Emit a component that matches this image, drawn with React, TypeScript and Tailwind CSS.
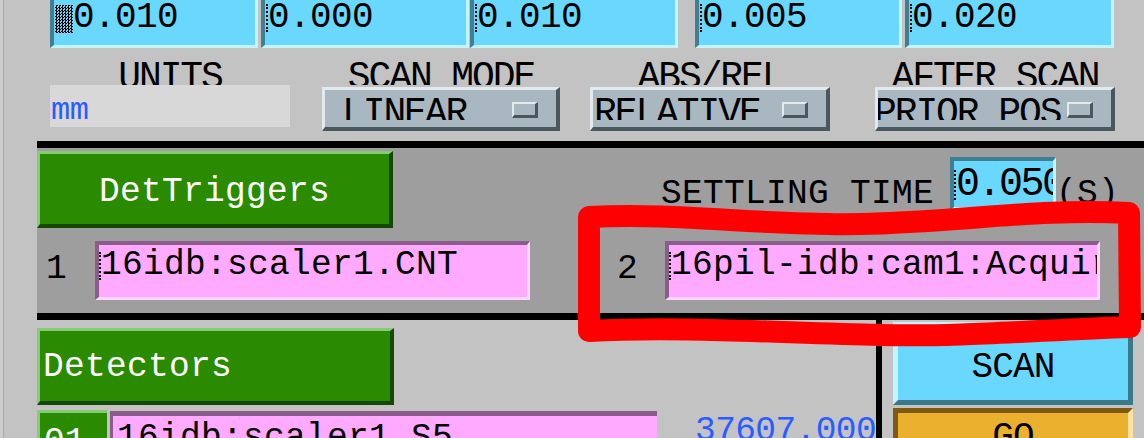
import React from "react";

type FieldProps = { value: string; className?: string; first?: boolean };

function TopField({ value, className = "", first }: FieldProps) {
  return (
    <div
      className={`h-full overflow-hidden bg-[#6ad8fc] border-l-[4px] border-r-[3px] border-b-[3px] border-l-[#3f7f93] border-r-[#c4f4ff] border-b-[#c4f4ff] ${className}`}
    >
      <div className="flex items-start pl-[1px] text-[36px] leading-none tracking-[-0.6px] text-black whitespace-nowrap">
        {first ? (
          <span className="mt-[5px] w-[18px] h-[28px] shrink-0 bg-[repeating-conic-gradient(#000_0_25%,#6ad8fc_0_50%)] bg-[length:3px_3px]" />
        ) : (
          <span className="mt-[4px] h-[28px] w-0 shrink-0 border-l-2 border-dotted border-black" />
        )}
        <span>{value}</span>
      </div>
    </div>
  );
}

function MenuButton({ label, pad }: { label: string; pad: string }) {
  return (
    <div className="mt-[2px] h-[44px] flex bg-[#a9b8c0] border-[3px] border-b-[4px] border-r-[4px] border-t-[#e2eaee] border-l-[#e2eaee] border-b-[#4a585e] border-r-[#4a585e]">
      <div className="flex-1 min-w-0 h-[30px] pt-[5px] overflow-hidden whitespace-nowrap text-[38px] leading-none tracking-[-2.1px] text-black">
        <span className={`inline-block ${pad}`}>{label}</span>
      </div>
      <div className="self-start mt-[12px] mr-[18px] ml-[4px] w-[26px] h-[16px] shrink-0 bg-[#a9b8c0] border-2 border-b-[3px] border-r-[3px] border-t-[#e2eaee] border-l-[#e2eaee] border-b-[#4a585e] border-r-[#4a585e]" />
    </div>
  );
}

function Label({ text }: { text: string }) {
  return (
    <div className="h-[28px] pt-[2px] overflow-hidden whitespace-nowrap text-center text-[38px] leading-none tracking-[-2.1px] text-black">
      {text}
    </div>
  );
}

function GreenButton({ text, className = "", inner = "" }: { text: string; className?: string; inner?: string }) {
  return (
    <div
      className={`shrink-0 bg-[#2b8b00] border-[3px] border-b-[4px] border-r-[4px] border-t-[#86cc76] border-l-[#86cc76] border-b-[#164800] border-r-[#164800] text-white text-[34.5px] leading-none tracking-[0.3px] whitespace-nowrap ${className}`}
    >
      <div className={inner}>{text}</div>
    </div>
  );
}

function PinkField({ value, className = "", inner = "" }: { value: string; className?: string; inner?: string }) {
  return (
    <div
      className={`shrink-0 overflow-hidden bg-[#ffa9ff] border-[4px] border-b-[3px] border-r-[3px] border-t-[#8b5b8b] border-l-[#8b5b8b] border-b-[#ffd6ff] border-r-[#ffd6ff] ${className}`}
    >
      <div className={`flex items-start whitespace-nowrap text-[34.5px] leading-none tracking-[0.3px] text-black ${inner}`}>
        <span className="mt-[4px] h-[28px] w-0 shrink-0 border-l-2 border-dotted border-black" />
        <span>{value}</span>
      </div>
    </div>
  );
}

export default function App() {
  return (
    <div className="relative w-[1144px] h-[438px] overflow-hidden flex bg-[#c3c3c3] font-['Liberation_Mono','DejaVu_Sans_Mono',monospace]">
      <div className="w-[3px] shrink-0 bg-[#cdcdcd]" />
      <div className="w-[1px] shrink-0 bg-[#a9a9a9]" />

      <div className="flex-1 min-w-0 flex flex-col">
        {/* step fields */}
        <div className="flex shrink-0 h-[48px] pl-[46px]">
          <TopField value="0.010" first className="w-[208px]" />
          <TopField value="0.000" className="ml-[3px] w-[208px]" />
          <TopField value="0.010" className="ml-[1px] w-[208px]" />
          <TopField value="0.005" className="ml-[17px] w-[207px]" />
          <TopField value="0.020" className="ml-[3px] w-[209px]" />
        </div>

        {/* units / modes */}
        <div className="flex shrink-0 mt-[9px] pl-[46px]">
          <div className="w-[240px]">
            <Label text="UNITS" />
            <div className="h-[42px] bg-[#d8d8d8] pt-[10px] pl-[1px] text-[32px] leading-none tracking-[-0.4px] text-[#2b5cff]">
              mm
            </div>
          </div>
          <div className="ml-[32px] w-[238px]">
            <Label text="SCAN MODE" />
            <MenuButton label="LINEAR" pad="pl-[17px]" />
          </div>
          <div className="ml-[30px] w-[240px]">
            <Label text="ABS/REL" />
            <MenuButton label="RELATIVE" pad="pl-[1px]" />
          </div>
          <div className="ml-[45px] w-[240px]">
            <Label text="AFTER SCAN" />
            <MenuButton label="PRIOR POS" pad="-ml-[4px]" />
          </div>
        </div>

        {/* detector triggers panel */}
        <div className="shrink-0 ml-[33px] mt-[10px] h-[179px] border-y-[7px] border-black bg-[#9e9e9e]">
          <div className="flex h-[80px] items-start">
            <GreenButton text="DetTriggers" className="mt-[3px] h-[77px] w-[356px]" inner="pt-[21px] text-center" />
            <div className="ml-auto mr-[25px] flex items-start">
              <div className="mt-[29px] mr-[16px] text-[34.5px] leading-none tracking-[0.3px] text-black whitespace-nowrap">
                SETTLING TIME
              </div>
              <div className="mt-[9px] h-[53px] w-[106px] overflow-hidden bg-[#6ad8fc] border-[4px] border-b-[3px] border-r-[3px] border-t-[#3f7f93] border-l-[#3f7f93] border-b-[#c4f4ff] border-r-[#c4f4ff]">
                <div className="flex items-start pt-[4px] whitespace-nowrap text-[40px] leading-none tracking-[-2.5px] text-black">
                  <span className="mt-[5px] h-[30px] w-0 shrink-0 border-l-2 border-dotted border-black" />
                  <span>0.050</span>
                </div>
              </div>
              <div className="mt-[29px] text-[34.5px] leading-none tracking-[0.3px] text-black">(S)</div>
            </div>
          </div>
          <div className="flex items-start mt-[13px]">
            <div className="w-[58px] pl-[9px] pt-[11px] text-[34.5px] leading-none text-black">1</div>
            <PinkField value="16idb:scaler1.CNT" className="h-[59px] w-[435px]" inner="pt-[3px]" />
            <div className="ml-[87px] w-[48px] pt-[11px] text-[34.5px] leading-none text-black">2</div>
            <PinkField value="16pil-idb:cam1:Acquire" className="h-[59px] w-[435px]" inner="pt-[3px]" />
          </div>
        </div>

        {/* detectors + scan/go */}
        <div className="flex flex-1 min-h-0">
          <div className="ml-[33px] w-[839px] shrink-0 flex flex-col">
            <GreenButton text="Detectors" className="mt-[8px] h-[77px] w-[357px]" inner="pt-[19px] pl-[3px]" />
            <div className="mt-[5px] shrink-0 flex items-start">
              <div className="shrink-0 w-[70px] h-[40px] bg-[#2b8b00] border-t-[3px] border-l-[3px] border-[#86cc76] pt-[12px] pl-[4px] text-[34.5px] leading-none text-white">
                01
              </div>
              <div className="shrink-0 ml-[3px] mt-[1px] w-[547px] h-[40px] overflow-hidden bg-[#ffa9ff] border-t-[5px] border-l-[3px] border-[#8b5b8b] pt-[5px] pl-[4px] text-[34.5px] leading-none tracking-[0.3px] text-black whitespace-nowrap">
                16idb:scaler1.S5
              </div>
              <div className="ml-auto pt-[4px] text-[34.5px] leading-none tracking-[-0.6px] text-[#2b5cff]">37607.000</div>
            </div>
          </div>
          <div className="w-[6px] shrink-0 bg-black" />
          <div className="ml-[11px] w-[240px] shrink-0 flex flex-col">
            <div className="shrink-0 mt-[2px] h-[83px] bg-[#6ad8fc] border-[4px] border-l-[5px] border-r-[5px] border-b-[5px] border-t-[#c4f4ff] border-l-[#c4f4ff] border-r-[#3c7888] border-b-[#3c7888] pt-[24px] text-center text-[36px] leading-none tracking-[-0.8px] text-black">
              SCAN
            </div>
            <div className="shrink-0 mt-[3px] h-[40px] bg-[#ecb02f] border-[5px] border-b-0 border-t-[#7d5a12] border-l-[#7d5a12] border-r-[#ffe2a2] pt-[7px] text-center text-[36px] leading-none tracking-[-0.8px] text-black">
              GO
            </div>
          </div>
        </div>
      </div>

      {/* hand-drawn red annotation */}
      <svg className="absolute inset-0 pointer-events-none" width="1144" height="438" viewBox="0 0 1144 438">
        <path
          d="M 589 217 C 680 212, 760 226, 860 224 C 960 222, 1040 208, 1129 213 L 1130 327 C 1040 330, 960 337, 880 335 C 780 333, 680 326, 589 331 Z"
          fill="none"
          stroke="#ff0000"
          strokeWidth="22"
          strokeLinejoin="round"
        />
      </svg>
    </div>
  );
}
